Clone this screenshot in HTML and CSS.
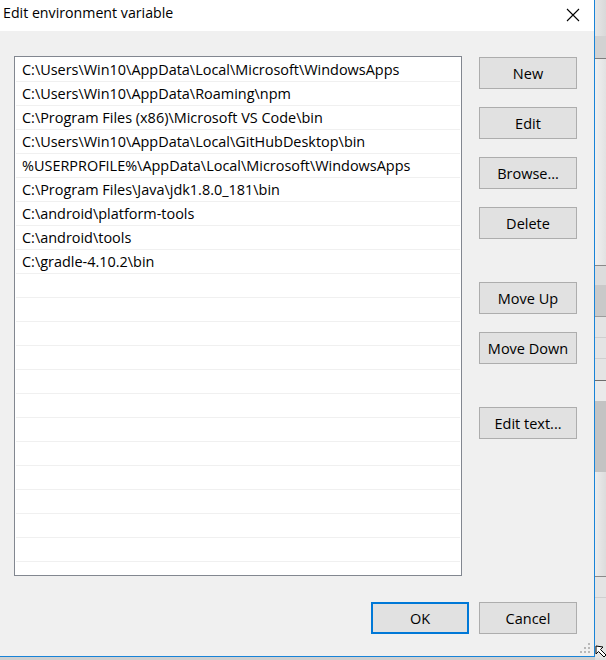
FILE: index.html
```html
<!DOCTYPE html>
<html>
<head>
<meta charset="utf-8">
<link rel="stylesheet" href="styles.css">
</head>
<body>
<div class="screen">
  <div class="dialog">
    <div class="titlebar">
      <span class="title">Edit environment variable</span>
      <svg class="close" width="14" height="14" viewBox="0 0 14 14"><path d="M1 1L13 13M13 1L1 13" stroke="#000" stroke-width="1.1" fill="none"/></svg>
    </div>
    <div class="content">
      <div class="main">
        <div class="list">
          <div class="row">C:\Users\Win10\AppData\Local\Microsoft\WindowsApps</div>
          <div class="row">C:\Users\Win10\AppData\Roaming\npm</div>
          <div class="row">C:\Program Files (x86)\Microsoft VS Code\bin</div>
          <div class="row">C:\Users\Win10\AppData\Local\GitHubDesktop\bin</div>
          <div class="row">%USERPROFILE%\AppData\Local\Microsoft\WindowsApps</div>
          <div class="row">C:\Program Files\Java\jdk1.8.0_181\bin</div>
          <div class="row">C:\android\platform-tools</div>
          <div class="row">C:\android\tools</div>
          <div class="row">C:\gradle-4.10.2\bin</div>
          <div class="row"></div><div class="row"></div><div class="row"></div><div class="row"></div>
          <div class="row"></div><div class="row"></div><div class="row"></div><div class="row"></div>
          <div class="row"></div><div class="row"></div><div class="row"></div><div class="row"></div>
          <div class="row"></div>
        </div>
        <div class="side">
          <div class="group">
            <div class="btn">New</div>
            <div class="btn">Edit</div>
            <div class="btn">Browse...</div>
            <div class="btn">Delete</div>
          </div>
          <div class="group">
            <div class="btn">Move Up</div>
            <div class="btn">Move Down</div>
          </div>
          <div class="group">
            <div class="btn">Edit text...</div>
          </div>
        </div>
      </div>
      <div class="footer">
        <div class="btn default">OK</div>
        <div class="btn">Cancel</div>
      </div>
      <svg class="grip" width="12" height="12" viewBox="0 0 12 12" fill="#b8b8b8">
        <rect x="8" y="0" width="2" height="2"/>
        <rect x="4" y="4" width="2" height="2"/><rect x="8" y="4" width="2" height="2"/>
        <rect x="0" y="8" width="2" height="2"/><rect x="4" y="8" width="2" height="2"/><rect x="8" y="8" width="2" height="2"/>
      </svg>
    </div>
  </div>
  <div class="backdrop">
    <div class="b b1"></div>
    <div class="b b2"></div>
    <div class="b b3"></div>
    <div class="b b4"></div>
    <div class="b b5"></div>
    <div class="b b6"></div>
    <div class="b b7"></div>
    <div class="b b8"></div>
    <div class="b b9"></div>
    <div class="b b10"></div>
    <div class="b b11"></div>
    <div class="b b12"></div>
    <div class="b b13"></div>
  </div>
  <svg class="cursor" width="12" height="16" viewBox="0 0 12 16"><path d="M1 1L1 9L3.5 6.5L9 12L11 10L5.5 4.5L8 2Z" fill="#fff" stroke="#000" stroke-width="1"/></svg>
</div>
</body>
</html>
```
FILE: styles.css
```css
* { box-sizing: border-box; }
html, body { margin: 0; padding: 0; }
body {
  width: 606px;
  height: 660px;
  overflow: hidden;
  background: #d4d4d4;
  font-family: "Open Sans", "Noto Sans", sans-serif;
  color: #000;
}
.screen {
  position: relative;
  display: flex;
  width: 606px;
  height: 660px;
  background: #cfcfcf;
}
.dialog {
  width: 595px;
  height: 657px;
  flex: none;
  display: flex;
  flex-direction: column;
  border-right: 1px solid #1883d7;
  border-bottom: 1px solid #1883d7;
  background: #f0f0f0;
}
.titlebar {
  height: 31px;
  flex: none;
  background: #fff;
  display: flex;
  align-items: center;
  justify-content: space-between;
  padding: 0 14px 6px 3px;
}
.title {
  font-size: 14.2px;
  letter-spacing: 0;
}
.close { display: block; margin-top: 4px; }
.content {
  position: relative;
  flex: 1;
  display: flex;
  flex-direction: column;
  padding: 25px 17px 0 14px;
}
.main {
  display: flex;
  gap: 17px;
}
.list {
  width: 448px;
  height: 520px;
  border: 1px solid #828790;
  background: #fff;
  padding: 1px;
  overflow: hidden;
  flex: none;
}
.row {
  height: 24px;
  border-bottom: 1px solid #f0f0f0;
  padding-left: 6px;
  padding-top: 1px;
  font-size: 14.45px;
  line-height: 22px;
  white-space: nowrap;
}
.side {
  margin-top: 1px;
  width: 98px;
  display: flex;
  flex-direction: column;
  gap: 43px;
}
.group {
  display: flex;
  flex-direction: column;
  gap: 18px;
}
.btn {
  width: 98px;
  height: 32px;
  background: #e1e1e1;
  border: 1px solid #adadad;
  display: flex;
  align-items: center;
  justify-content: center;
  font-size: 14.5px;
  padding-top: 1px;
}
.btn.default {
  border: 2px solid #0078d7;
}
.footer {
  display: flex;
  justify-content: flex-end;
  gap: 10px;
  margin-top: 26px;
}
.grip {
  position: absolute;
  right: 2px;
  bottom: 1px;
}
.backdrop {
  flex: 1;
  display: flex;
  flex-direction: column;
  background: #dedede;
}
.b { flex: none; }
.b1 { height: 36px; background: linear-gradient(90deg, #e6e6e6, #d9d9d9); }
.b2 { height: 23px; background: #d2d2d2; border-bottom: 1px solid #7d7d7d; }
.b3 { height: 207px; background: linear-gradient(90deg, #f0f0f0, #e2e2e2); border-bottom: 1px solid #8a8a8a; }
.b4 { height: 19px; background: #dcdcdc; }
.b5 { height: 32px; background: #c9c9c9; border-bottom: 1px solid #9c9c9c; }
.b6 { height: 21px; background: #e4e4e4; border-bottom: 1px solid #cfcfcf; }
.b7 { height: 21px; background: #e4e4e4; border-bottom: 1px solid #cfcfcf; }
.b8 { height: 22px; background: #e4e4e4; border-bottom: 1px solid #6e6e6e; }
.b9 { height: 20px; background: #eaeaea; }
.b10 { height: 71px; background: #c3c3c3; }
.b11 { height: 105px; background: linear-gradient(90deg, #ececec, #dcdcdc); border-bottom: 1px solid #8a8a8a; }
.b12 { height: 21px; background: #e4e4e4; border-bottom: 1px solid #cfcfcf; }
.b13 { height: 60px; background: #e4e4e4; }
.cursor {
  position: absolute;
  left: 595px;
  top: 645px;
}
```
